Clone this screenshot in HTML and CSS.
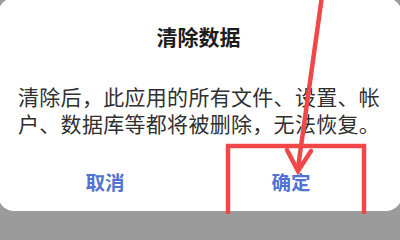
FILE: index.html
```html
<!DOCTYPE html>
<html lang="zh-CN">
<head>
<meta charset="utf-8">
<link rel="stylesheet" href="styles.css">
</head>
<body>
<div class="dialog">
  <h1 class="title">清除数据</h1>
  <div class="message">
    <p class="line">清除后，此应用的所有文件、设置、帐</p>
    <p class="line">户、数据库等都将被删除，无法恢复。</p>
  </div>
  <div class="actions">
    <button class="btn">取消</button>
    <button class="btn">确定</button>
  </div>
</div>
<svg class="annotation" width="400" height="214" viewBox="0 0 400 214">
  <line x1="322" y1="-4" x2="298" y2="168" stroke="#f04848" stroke-width="4.5" stroke-linecap="round"/>
  <polyline points="287,150 298,171 311,151" fill="none" stroke="#f04848" stroke-width="4.5" stroke-linecap="round" stroke-linejoin="miter"/>
  <rect x="228" y="146" width="136" height="90" fill="none" stroke="#f04848" stroke-width="4.5"/>
</svg>
</body>
</html>
```
FILE: styles.css
```css
html, body {
  margin: 0;
  padding: 0;
}
body {
  width: 400px;
  height: 214px;
  overflow: hidden;
  background: #9b9b9b;
  position: relative;
  font-family: "Noto Sans CJK SC", "Noto Sans", sans-serif;
}
.dialog {
  margin: -2px -2px 0 -2px;
  height: 213px;
  background: #ffffff;
  border-radius: 16px;
  display: flex;
  flex-direction: column;
  box-sizing: border-box;
  padding-top: 24px;
}
.title {
  margin: 0;
  font-size: 21px;
  line-height: 28px;
  font-weight: 700;
  color: #1c1c1c;
  text-align: center;
  padding-right: 3px;
}
.message {
  margin-top: 33px;
  padding: 0 20px 0 20px;
  display: flex;
  flex-direction: column;
}
.line {
  margin: 0;
  font-size: 21px;
  letter-spacing: 0.3px;
  line-height: 27px;
  height: 27px;
  color: #303030;
  white-space: nowrap;
}
.actions {
  display: flex;
  padding: 0 14px 0 14px;
  margin-top: 25px;
}
.btn {
  flex: 1;
  border: 0;
  background: transparent;
  font-family: inherit;
  font-size: 19.5px;
  line-height: 40px;
  font-weight: 700;
  color: #4f72d4;
  padding: 0;
}
.btn + .btn {
  padding-right: 4px;
}
.annotation {
  position: absolute;
  left: 0;
  top: 0;
  pointer-events: none;
}
```
